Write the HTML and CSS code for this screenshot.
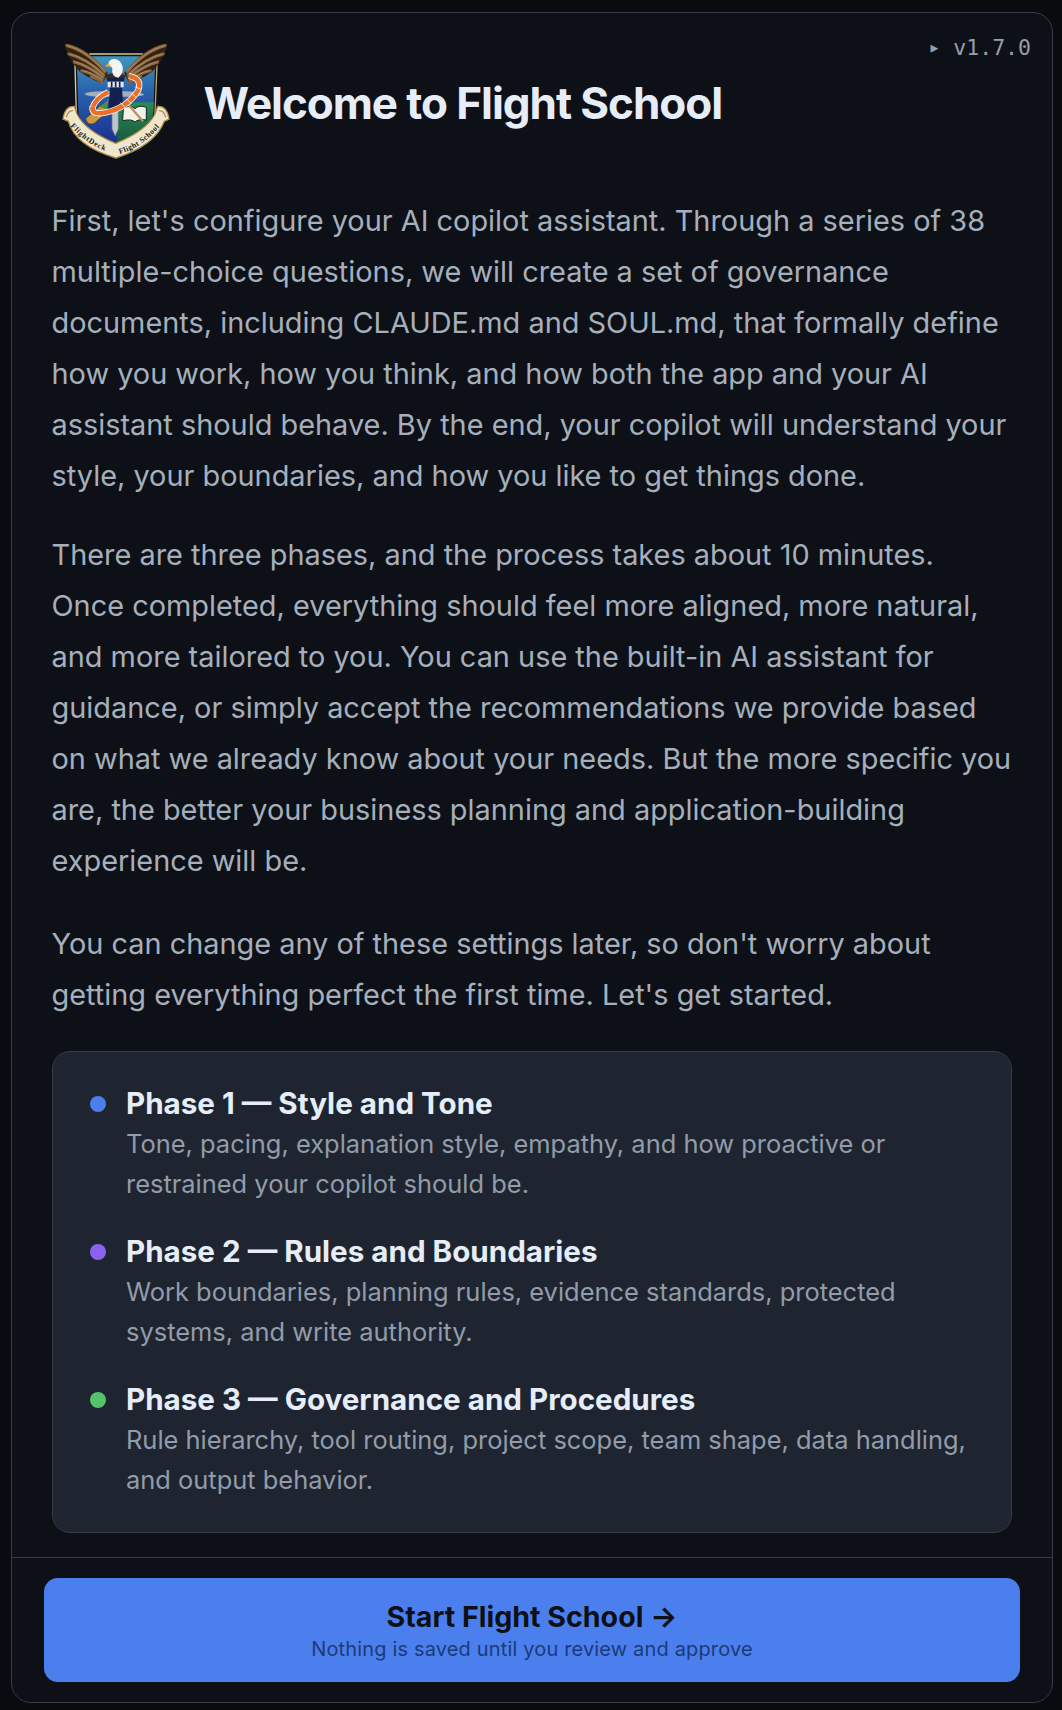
FILE: index.html
```html
<!DOCTYPE html>
<html lang="en">
<head>
<meta charset="utf-8">
<title>Welcome to Flight School</title>
<link rel="stylesheet" href="styles.css">
</head>
<body>
<main class="frame">
  <span class="version"><span class="caret">▶</span> v1.7.0</span>
  <div class="scroll">
    <header class="head">
      <svg class="logo" viewBox="0 0 390 390" aria-hidden="true">
        <defs>
          <linearGradient id="sky" x1="0" y1="0" x2="0" y2="1"><stop offset="0" stop-color="#3f97bd"/><stop offset=".4" stop-color="#2a62ad"/><stop offset="1" stop-color="#1b2f8e"/></linearGradient>
          <linearGradient id="gold" x1="0" y1="0" x2="1" y2="1"><stop offset="0" stop-color="#e6d6a2"/><stop offset="1" stop-color="#a98c4c"/></linearGradient>
          <linearGradient id="green" x1="0" y1="0" x2="0" y2="1"><stop offset="0" stop-color="#2a8a5a"/><stop offset="1" stop-color="#17593a"/></linearGradient>
          <path id="bl" d="M46 276 Q96 334 172 359"/>
          <path id="br" d="M194 360 Q272 336 326 262"/>
          <g id="wing">
            <path d="M28 28 Q75 32 114 70 Q135 90 158 116 L142 150 L105 132 L75 114 L54 88 L38 62 Z" fill="#33220f"/>
            <g fill="none" stroke="#8a6643" stroke-linecap="round">
              <path d="M36 35 Q92 48 150 112" stroke-width="10"/>
              <path d="M42 60 Q92 72 146 122" stroke-width="10"/>
              <path d="M58 84 Q97 94 144 130" stroke-width="10"/>
              <path d="M80 110 Q107 115 142 138" stroke-width="9"/>
              <path d="M108 128 Q124 132 142 146" stroke-width="8"/>
            </g>
            <path d="M38 35 Q92 48 150 112M46 60 Q92 72 146 122M62 84 Q97 94 144 130M84 110 Q107 115 142 138" fill="none" stroke="#bb9a72" stroke-width="2"/>
          </g>
        </defs>
        <path d="M105 60 H262 L306 92 L300 240 Q290 295 183 335 Q75 295 64 240 L60 92 Z" fill="#14120e" stroke="url(#gold)" stroke-width="4"/>
        <path d="M110 67 H256 L300 95 L295 235 Q285 290 183 329 Q80 290 70 235 L66 95 Z" fill="url(#sky)"/>
        <path d="M188 205 H296 L295 235 Q285 290 186 328 Z" fill="url(#green)"/>
        <path d="M88 180 Q100 170 160 172 H205 Q255 172 268 182 Q250 190 205 188 H150 Q100 190 88 180Z" fill="#a4afb8"/>
        <use href="#wing"/>
        <use href="#wing" transform="translate(366 0) scale(-1 1)"/>
        <path d="M150 124 Q182 110 212 124 L205 148 H160 Z" fill="#3c2a1c"/>
        <path d="M171 222 H190 V285 L180.500 306 L171 285 Z" fill="#bcc6cf" stroke="#69737d" stroke-width="2"/>
        <path d="M205 222 Q228 212 240 224 Q252 212 274 220 V258 Q250 254 240 264 Q230 254 203 260 Z" fill="#f3f1e6" stroke="#12241c" stroke-width="3"/>
        <path d="M216 208 L264 262" stroke="#b39462" stroke-width="7"/>
        <path d="M92 254 L138 214 L158 232 L118 268 Q98 276 92 254Z" fill="#c9983f" stroke="#5d4626" stroke-width="2"/>
        <path d="M134 218 L160 198 L156 228Z" fill="#4f8f3b"/>
        <path d="M112 222 Q122 192 160 174" fill="none" stroke="#fff" stroke-width="18"/>
        <path d="M112 222 Q122 192 160 174" fill="none" stroke="#e8702a" stroke-width="13"/>
        <path d="M158 132 H206 L201 164 L206 226 H160 L165 164 Z" fill="#13204f"/>
        <path d="M158 143 H206 V160 H158Z" fill="#dfe8f5"/>
        <path d="M170 143 V160M182 143 V160M194 143 V160" stroke="#13204f" stroke-width="5"/>
        <path d="M113 218 Q108 244 150 236 Q218 222 250 168 Q262 134 222 126" fill="none" stroke="#fff" stroke-width="19"/>
        <path d="M113 218 Q108 244 150 236 Q218 222 250 168 Q262 134 222 126" fill="none" stroke="#e8702a" stroke-width="14"/>
        <path d="M196 206 L212 222M214 194 L228 208M230 178 L246 192M240 158 L258 166" stroke="#fbe6d6" stroke-width="3"/>
        <path d="M160 90 Q162 75 178 75 Q196 75 203 98 Q206 118 190 131 Q168 128 172 102 Z" fill="#f6f4ee"/>
        <path d="M160 86 L150 97 L168 100Z" fill="#e0a63a"/>
        <path d="M24 255 Q30 215 58 217 L66 240 Q90 290 182 328 Q275 290 300 240 L308 217 Q336 215 342 255 L328 262 Q300 335 183 372 Q60 335 40 262 Z" fill="#efe6cc" stroke="#a98c4c" stroke-width="4"/>
        <path d="M34 250 Q40 228 54 230M332 250 Q326 228 312 230" fill="none" stroke="#a98c4c" stroke-width="4"/>
        <text class="crest"><textPath href="#bl" textLength="128">FlightDeck</textPath></text>
        <text class="crest"><textPath href="#br" textLength="146">Flight School</textPath></text>
      </svg>
      <h1 class="title">Welcome to Flight School</h1>
    </header>

    <p class="copy">First, let's configure your AI copilot assistant. Through a series of 38 multiple-choice questions, we will create a set of governance documents, including CLAUDE.md and SOUL.md, that formally define how you work, how you think, and how both the app and your AI assistant should behave. By the end, your copilot will understand your style, your boundaries, and how you like to get things done.</p>
    <p class="copy">There are three phases, and the process takes about 10 minutes. Once completed, everything should feel more aligned, more natural, and more tailored to you. You can use the built-in AI assistant for guidance, or simply accept the recommendations we provide based on what we already know about your needs. But the more specific you are, the better your business planning and application-building experience will be.</p>
    <p class="copy copy-last">You can change any of these settings later, so don't worry about getting everything perfect the first time. Let's get started.</p>

    <section class="phases">
      <div class="phase">
        <span class="dot dot-blue"></span>
        <div>
          <h2 class="phase-title">Phase 1 — Style and Tone</h2>
          <p class="phase-desc">Tone, pacing, explanation style, empathy, and how proactive or restrained your copilot should be.</p>
        </div>
      </div>
      <div class="phase">
        <span class="dot dot-purple"></span>
        <div>
          <h2 class="phase-title">Phase 2 — Rules and Boundaries</h2>
          <p class="phase-desc">Work boundaries, planning rules, evidence standards, protected systems, and write authority.</p>
        </div>
      </div>
      <div class="phase">
        <span class="dot dot-green"></span>
        <div>
          <h2 class="phase-title">Phase 3 — Governance and Procedures</h2>
          <p class="phase-desc">Rule hierarchy, tool routing, project scope, team shape, data handling, and output behavior.</p>
        </div>
      </div>
    </section>
  </div>
  <footer class="foot">
    <button class="start" type="button">
      <span class="start-main">Start Flight School →</span>
      <span class="start-sub">Nothing is saved until you review and approve</span>
    </button>
  </footer>
</main>
</body>
</html>
```

FILE: styles.css
```css
* { box-sizing: border-box; }
html, body { margin: 0; height: 100%; }
body {
  background: #090b0f;
  font-family: Inter, "Liberation Sans", sans-serif;
  padding: 12px 9px 7px 11px;
}
.frame {
  position: relative;
  height: 1691px;
  background: #0d1117;
  border: 1.5px solid #353b47;
  border-radius: 20px;
  display: flex;
  flex-direction: column;
  justify-content: space-between;
}
.version {
  position: absolute;
  top: 23px;
  right: 21px;
  display: flex;
  align-items: center;
  font: 21.5px/24px "DejaVu Sans Mono", monospace;
  white-space: pre;
  color: #959eab;
}
.caret { font-size: 13px; margin-right: 2px; }
.scroll { padding: 21px 40px 0 39.5px; }
.head { display: flex; align-items: center; gap: 19px; margin-bottom: 31px; }
.logo { width: 130px; height: 130px; margin-left: 3px; flex: none; }
.crest { font: bold 23px "Liberation Serif", serif; fill: #1c1a14; }
.title {
  margin: 0;
  padding-top: 8px;
  font-size: 44px;
  line-height: 56px;
  font-weight: 700;
  letter-spacing: -1.05px;
  color: #e6edf7;
}
.copy {
  margin: 0 0 28px;
  font-size: 28.9px;
  line-height: 51px;
  color: #a6afbc;
}
.copy-last { margin-top: 32px; }
.phases {
  margin-top: 31px;
  background: #1e2530;
  border: 1.5px solid #353b47;
  border-radius: 18px;
  padding: 31px 36px 32px 37.5px;
  display: flex;
  flex-direction: column;
  gap: 26.6px;
}
.phase { display: flex; gap: 20px; }
.dot { width: 16px; height: 16px; border-radius: 50%; margin-top: 13px; flex: none; }
.dot-blue { background: #4c7fee; }
.dot-purple { background: #8b62f0; }
.dot-green { background: #56c26a; }
.phase-title {
  margin: 0;
  font-size: 29.6px;
  line-height: 40px;
  font-weight: 700;
  color: #e6edf7;
}
.phase-desc {
  margin: 1.4px 0 0;
  font-size: 25.45px;
  line-height: 40px;
  color: #929caa;
}
.foot {
  border-top: 1.5px solid #353b47;
  padding: 20px 32px 20px;
}
.start {
  width: 100%;
  height: 104px;
  display: flex;
  flex-direction: column;
  align-items: center;
  justify-content: center;
  background: #4c7fee;
  border: 0;
  border-radius: 14px;
  font-family: inherit;
}
.start-main { font-size: 28.6px; line-height: 38px; font-weight: 700; color: #0d1117; }
.start-sub { font-size: 20px; line-height: 26px; letter-spacing: .16px; color: #1c3a78; }
```
